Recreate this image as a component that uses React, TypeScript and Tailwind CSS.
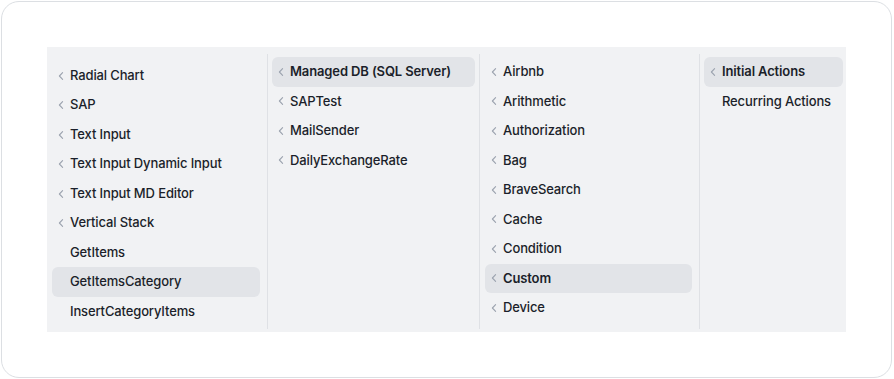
import React from "react";

type Item = { label: string; arrow?: boolean; active?: boolean; bold?: boolean };

const columns: { width: string; pad: string; pt: string; border: boolean; items: Item[] }[] = [
  {
    width: "w-[221px]",
    pad: "pl-[5px] pr-[7px]",
    pt: "pt-[6.75px]",
    border: true,
    items: [
      { label: "Radial Chart", arrow: true },
      { label: "SAP", arrow: true },
      { label: "Text Input", arrow: true },
      { label: "Text Input Dynamic Input", arrow: true },
      { label: "Text Input MD Editor", arrow: true },
      { label: "Vertical Stack", arrow: true },
      { label: "GetItems" },
      { label: "GetItemsCategory", active: true },
      { label: "InsertCategoryItems" },
    ],
  },
  {
    width: "w-[212px]",
    pad: "pl-[4px] pr-[4px]",
    pt: "pt-[3px]",
    border: true,
    items: [
      { label: "Managed DB (SQL Server)", arrow: true, active: true, bold: true },
      { label: "SAPTest", arrow: true },
      { label: "MailSender", arrow: true },
      { label: "DailyExchangeRate", arrow: true },
    ],
  },
  {
    width: "w-[220px]",
    pad: "pl-[5px] pr-[7px]",
    pt: "pt-[3px]",
    border: true,
    items: [
      { label: "Airbnb", arrow: true },
      { label: "Arithmetic", arrow: true },
      { label: "Authorization", arrow: true },
      { label: "Bag", arrow: true },
      { label: "BraveSearch", arrow: true },
      { label: "Cache", arrow: true },
      { label: "Condition", arrow: true },
      { label: "Custom", arrow: true, active: true, bold: true },
      { label: "Device", arrow: true },
    ],
  },
  {
    width: "flex-1",
    pad: "pl-[4px] pr-[3px]",
    pt: "pt-[3px]",
    border: false,
    items: [
      { label: "Initial Actions", arrow: true, active: true, bold: true },
      { label: "Recurring Actions" },
    ],
  },
];

function Chevron() {
  return (
    <svg viewBox="0 0 8 10" className="w-[8px] h-[10px] shrink-0" fill="none">
      <path d="M5.6 1.6 L2.4 5 L5.6 8.4" stroke="#9ca3af" strokeWidth="1.1" strokeLinecap="round" strokeLinejoin="round" />
    </svg>
  );
}

export default function App() {
  return (
    <div className="w-[894px] h-[379px] bg-white p-[1px]" style={{ fontFamily: "Inter, 'Noto Sans', sans-serif" }}>
      <div className="w-[891px] h-[377px] border border-[#dcdfe3] rounded-[18px] p-[45px]">
        <div className="flex h-full bg-[#f1f2f4] pt-[7px] pb-[3px]">
          {columns.map((col, ci) => (
            <div key={ci} className={`${col.width} h-full ${col.border ? "border-r border-[#dfe1e5]" : ""}`}>
              <div className={`${col.pad} ${col.pt} flex flex-col`}>
                {col.items.map((it, i) => (
                  <div
                    key={i}
                    className={`flex items-center h-[29.5px] pl-[5px] rounded-md text-[13px] tracking-[-0.01em] text-[#1b1f2a] ${
                      it.active ? "bg-[#e2e4e8]" : ""
                    } ${it.bold ? "font-semibold" : "font-medium"}`}
                  >
                    <span className="w-[8px] mr-[5px] flex items-center">{it.arrow ? <Chevron /> : null}</span>
                    <span className="whitespace-nowrap">{it.label}</span>
                  </div>
                ))}
              </div>
            </div>
          ))}
        </div>
      </div>
    </div>
  );
}
